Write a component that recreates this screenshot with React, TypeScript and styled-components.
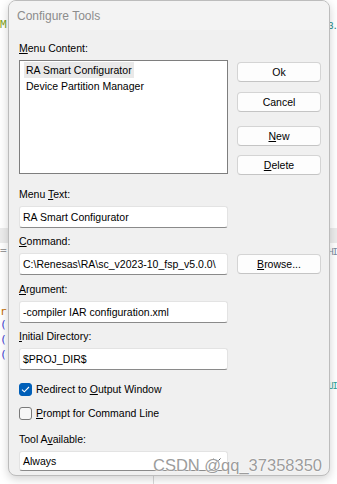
import React from "react";
import styled, { createGlobalStyle } from "styled-components";

const GlobalStyle = createGlobalStyle`
  html, body { margin: 0; padding: 0; background: #fff; }
  body { font-family: "Liberation Sans", Arial, sans-serif; }
`;

const Desktop = styled.div`
  position: relative;
  width: 337px;
  height: 484px;
  overflow: hidden;
  background: #ffffff;
  padding-left: 8px;
  box-sizing: border-box;
`;

const Band = styled.div`
  position: absolute;
  left: 0;
  right: 0;
  top: 228px;
  height: 15px;
  background: #ececec;
`;

const Frag = styled.span<{ $y: number; $color: string; $right?: boolean }>`
  position: absolute;
  ${({ $right }) => ($right ? "right: 0; font-size: 9px; letter-spacing: -1px;" : "left: 0; font-size: 11px;")}
  top: ${({ $y }) => $y}px;
  color: ${({ $color }) => $color};
  font-family: "DejaVu Sans Mono", monospace;
  line-height: 12px;
`;

const Divider = styled.div`
  position: absolute;
  left: 153px;
  top: 470px;
  width: 1px;
  height: 14px;
  background: #d8d8d8;
`;

const Window = styled.div`
  position: relative;
  z-index: 1;
  width: 322px;
  height: 476px;
  box-sizing: border-box;
  background: #f0f0f0;
  border: 1px solid #bcbcbc;
  border-radius: 8px;
  box-shadow: 0 3px 10px rgba(0, 0, 0, 0.18);
  overflow: hidden;
  display: flex;
  flex-direction: column;
`;

const TitleBar = styled.div`
  height: 29px;
  flex: none;
  background: #f3f3f3;
  display: flex;
  align-items: center;
  padding-left: 8px;
  font-size: 12px;
  color: #8c8c8c;
`;

const Body = styled.div`
  display: flex;
  flex-direction: column;
  padding: 12px 0 0 10px;
  font-size: 10.5px;
  color: #000;
`;

const TopRow = styled.div`
  display: flex;
  gap: 9px;
`;

const Column = styled.div<{ $width: number; $top?: number }>`
  width: ${({ $width }) => $width}px;
  padding-top: ${({ $top }) => $top ?? 0}px;
  display: flex;
  flex-direction: column;
`;

const Label = styled.div`
  height: 13px;
  line-height: 13px;
  white-space: nowrap;
`;

const ListBox = styled.div`
  margin-top: 5px;
  height: 114px;
  box-sizing: border-box;
  background: #fff;
  border: 1px solid #7e7e7e;
  padding: 1px 4px;
  display: flex;
  flex-direction: column;
  align-items: flex-start;
`;

const ListItem = styled.div<{ $selected?: boolean }>`
  height: 16px;
  line-height: 16px;
  padding: 0 2px;
  background: ${({ $selected }) => ($selected ? "#e9e9e9" : "transparent")};
`;

const Button = styled.div<{ $gap?: number }>`
  margin-top: ${({ $gap }) => $gap ?? 0}px;
  height: 20px;
  box-sizing: border-box;
  background: #fdfdfd;
  border: 1px solid #d4d4d4;
  border-bottom-color: #c4c4c4;
  border-radius: 4px;
  display: flex;
  align-items: center;
  justify-content: center;
  width: 84px;
  flex: none;
`;

const Field = styled.div<{ $gap: number }>`
  margin-top: ${({ $gap }) => $gap}px;
  display: flex;
  flex-direction: column;
  width: 209px;
`;

const ControlRow = styled.div`
  margin-top: 5px;
  display: flex;
  gap: 9px;
  align-items: flex-start;
`;

const Edit = styled.div<{ $height?: number }>`
  width: 209px;
  flex: none;
  height: ${({ $height }) => $height ?? 22}px;
  box-sizing: border-box;
  background: #fff;
  border: 1px solid #e3e3e3;
  border-bottom-color: #8a8a8a;
  border-radius: 3px;
  padding: 0 3px;
  display: flex;
  align-items: center;
  white-space: nowrap;
  overflow: hidden;
  position: relative;
`;

const BrowseButton = styled(Button)`
  margin-top: 1px;
`;

const CheckRow = styled.div<{ $gap: number }>`
  margin-top: ${({ $gap }) => $gap}px;
  height: 16px;
  display: flex;
  align-items: center;
  gap: 4px;
`;

const Box = styled.div<{ $checked?: boolean }>`
  width: 13px;
  height: 13px;
  box-sizing: border-box;
  border-radius: 3px;
  background: ${({ $checked }) => ($checked ? "#005fb8" : "#f7f7f7")};
  border: 1px solid ${({ $checked }) => ($checked ? "#005fb8" : "#7a7a7a")};
  display: flex;
  align-items: center;
  justify-content: center;
`;

const Chevron = styled.svg`
  position: absolute;
  right: 6px;
  top: 6px;
`;

const Watermark = styled.div`
  position: absolute;
  z-index: 2;
  left: 153px;
  top: 455px;
  font-size: 16.5px;
  line-height: 20px;
  color: #9c9c9c;
  white-space: nowrap;
  text-shadow: 0 0 1px #fff, 0 0 1px #fff, 0 0 2px #fff;
`;

export default function App() {
  return (
    <>
      <GlobalStyle />
      <Desktop>
        <Band />
        <Frag $y={19} $color="#7fa31c">M</Frag>
        <Frag $right $y={20} $color="#1d8b8b">3.</Frag>
        <Frag $y={245} $color="#9a9a9a">=</Frag>
        <Frag $right $y={246} $color="#7a8aa0">HI</Frag>
        <Frag $y={306} $color="#c26a00">r</Frag>
        <Frag $y={319} $color="#3a3ad0">(</Frag>
        <Frag $y={334} $color="#3a3ad0">(</Frag>
        <Frag $y={349} $color="#3a3ad0">(</Frag>
        <Frag $right $y={380} $color="#2aa198">UI</Frag>
        <Divider />
        <Window>
          <TitleBar>Configure Tools</TitleBar>
          <Body>
            <TopRow>
              <Column $width={209}>
                <Label>
                  <u>M</u>enu Content:
                </Label>
                <ListBox>
                  <ListItem $selected>RA Smart Configurator</ListItem>
                  <ListItem>Device Partition Manager</ListItem>
                </ListBox>
              </Column>
              <Column $width={84} $top={20}>
                <Button>Ok</Button>
                <Button $gap={10}>Cancel</Button>
                <Button $gap={14}>
                  <span>
                    <u>N</u>ew
                  </span>
                </Button>
                <Button $gap={9}>
                  <span>
                    <u>D</u>elete
                  </span>
                </Button>
              </Column>
            </TopRow>

            <Field $gap={13}>
              <Label>
                Menu <u>T</u>ext:
              </Label>
              <ControlRow>
                <Edit>RA Smart Configurator</Edit>
              </ControlRow>
            </Field>

            <Field $gap={7}>
              <Label>
                <u>C</u>ommand:
              </Label>
              <ControlRow>
                <Edit>C:\Renesas\RA\sc_v2023-10_fsp_v5.0.0\</Edit>
                <BrowseButton>
                  <span>
                    <u>B</u>rowse...
                  </span>
                </BrowseButton>
              </ControlRow>
            </Field>

            <Field $gap={8}>
              <Label>
                <u>A</u>rgument:
              </Label>
              <ControlRow>
                <Edit>-compiler IAR configuration.xml</Edit>
              </ControlRow>
            </Field>

            <Field $gap={7}>
              <Label>
                <u>I</u>nitial Directory:
              </Label>
              <ControlRow>
                <Edit>$PROJ_DIR$</Edit>
              </ControlRow>
            </Field>

            <CheckRow $gap={11}>
              <Box $checked>
                <svg width="9" height="7" viewBox="0 0 9 7">
                  <path d="M1 3.6 L3.3 5.8 L8 1" fill="none" stroke="#fff" strokeWidth="1.1" />
                </svg>
              </Box>
              <span>
                Redirect to <u>O</u>utput Window
              </span>
            </CheckRow>

            <CheckRow $gap={8}>
              <Box />
              <span>
                <u>P</u>rompt for Command Line
              </span>
            </CheckRow>

            <Field $gap={12}>
              <Label>
                Tool A<u>v</u>ailable:
              </Label>
              <ControlRow>
                <Edit $height={20}>
                  Always
                  <Chevron width="8" height="5" viewBox="0 0 8 5">
                    <path d="M0.5 0.5 L4 4 L7.5 0.5" fill="none" stroke="#555" strokeWidth="1" />
                  </Chevron>
                </Edit>
              </ControlRow>
            </Field>
          </Body>
        </Window>
        <Watermark>CSDN @qq_37358350</Watermark>
      </Desktop>
    </>
  );
}
